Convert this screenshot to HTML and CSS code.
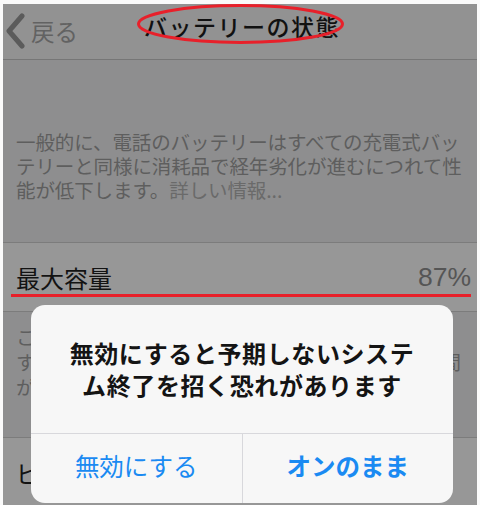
FILE: index.html
```html
<!DOCTYPE html>
<html>

<head>
<meta charset="utf-8">
<link rel="stylesheet" href="styles.css">
</head>

<body>
<div class="screen">

<div class="nav">
<div class="back">
<svg class="chevron" width="22" height="36" viewBox="0 0 22 36"><path d="M18 3 L5 18 L18 33" fill="none" stroke="#5b5b5b" stroke-width="5" stroke-linecap="round" stroke-linejoin="round"/></svg>
<span>戻る</span>
</div>
<div class="title">バッテリーの状態</div>
<svg class="ring" width="480" height="56" viewBox="0 0 480 56"><ellipse cx="237.5" cy="20" rx="102" ry="18.5" fill="none" stroke="#e8202a" stroke-width="3"/></svg>
</div>

<div class="note top">一般的に、電話のバッテリーはすべての充電式バッテリーと同様に消耗品で経年劣化が進むにつれて性能が低下します。<span class="link">詳しい情報...</span></div>

<div class="cell">
<span class="label">最大容量</span>
<span class="value">87%</span>
<div class="mark"></div>
</div>

<div class="note">この電話でピーク電力が急に不足した場合などは、すぐにシステムが終了してしまうことのある短期間が続くため、性能管理が適用されます。</div>

<div class="cell">
<span class="label">ピークパフォーマンス性能</span>
</div>

<div class="alert">
<div class="alert-title">無効にすると予期しないシステム終了を招く恐れがあります</div>
<div class="alert-buttons">
<button class="off">無効にする</button>
<button class="keep">オンのまま</button>
</div>
</div>

</div>
</body>
</html>
```

FILE: styles.css
```css
body {
    margin: 0;
    background: #fafafa;
    font-family: "Noto Sans CJK JP", sans-serif;
}

.screen {
    position: relative;
    height: 501px;
    margin: 4px 3px 0 3px;
    overflow: hidden;
    background: #8e8e8f;
}

.nav {
    position: relative;
    height: 55px;
    display: flex;
    align-items: center;
    background: #929292;
    border-bottom: 1px solid #767676;
}

.back {
    display: flex;
    align-items: center;
    gap: 5px;
    padding-left: 1px;
    color: #626262;
    font-size: 23.5px;
    margin-top: -2px;
}

.title {
    position: absolute;
    left: 0;
    right: 0;
    top: 5px;
    text-align: center;
    font-size: 23px;
    font-weight: 500;
    color: #111111;
    letter-spacing: 1.5px;
    padding-left: 4px;
}

.ring {
    position: absolute;
    left: 0;
    top: 0;
}

.note {
    padding: 12px 12px 38px 13px;
    font-size: 19.5px;
    letter-spacing: -0.1px;
    line-height: 25px;
    color: #5e5e5e;
    border-bottom: 1px solid #7c7c7c;
}

.note.top {
    padding-top: 70px;
    padding-bottom: 40px;
    line-height: 24px;
}

.link {
    color: #6a6a6a;
}

.cell {
    position: relative;
    height: 68px;
    display: flex;
    align-items: center;
    justify-content: space-between;
    padding: 0 6px 0 13px;
    background: #979797;
    border-bottom: 1px solid #7c7c7c;
}

.label {
    font-size: 24px;
    color: #131313;
}

.value {
    font-family: "Liberation Sans", sans-serif;
    font-size: 26.5px;
    color: #555555;
}

.mark {
    position: absolute;
    left: 8px;
    right: 6px;
    top: 51px;
    height: 3px;
    background: #e8202a;
}

.alert {
    position: absolute;
    left: 28px;
    top: 301px;
    width: 422px;
    height: 198px;
    display: flex;
    flex-direction: column;
    background: #f7f7f7;
    border-radius: 14px;
    overflow: hidden;
}

.alert-title {
    flex: 1;
    padding: 32px 30px 0 30px;
    text-align: center;
    font-size: 24px;
    font-weight: bold;
    line-height: 32px;
    letter-spacing: 0.6px;
    color: #141414;
}

.alert-buttons {
    display: flex;
    height: 69px;
    border-top: 1px solid #d8d8dc;
}

.alert-buttons button {
    flex: 1;
    border: none;
    background: none;
    font-family: "Noto Sans CJK JP", sans-serif;
    font-size: 24.5px;
    color: #1a8af2;
    padding: 0 0 6px 0;
}

.alert-buttons .keep {
    font-weight: bold;
    border-left: 1px solid #d8d8dc;
}
```
